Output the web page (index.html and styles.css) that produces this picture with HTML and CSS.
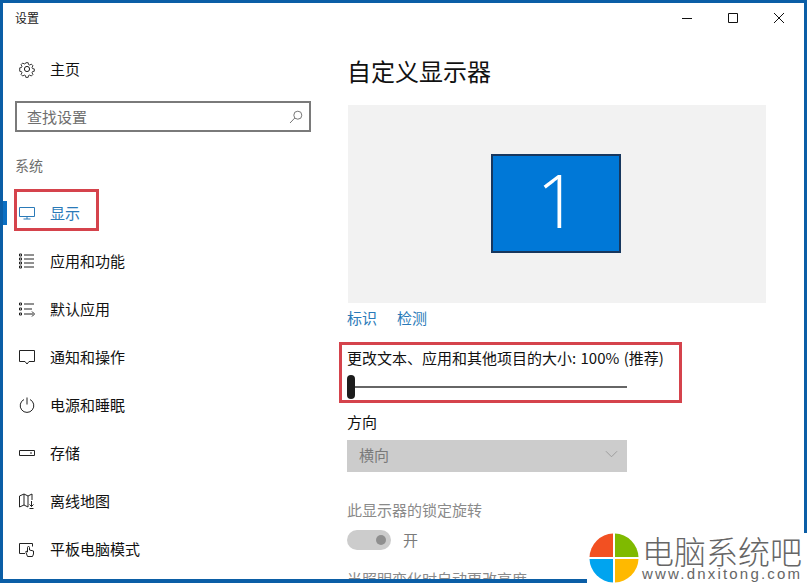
FILE: index.html
```html
<!DOCTYPE html>
<html lang="zh-CN">
<head>
<meta charset="utf-8">
<title>设置</title>
<link rel="stylesheet" href="styles.css">
</head>
<body>
<div class="window">
  <header class="titlebar">
    <span class="title">设置</span>
    <div class="controls">
      <svg class="ctl" viewBox="0 0 12 12"><path d="M1 6.500h10"/></svg>
      <svg class="ctl" viewBox="0 0 12 12"><path d="M1.500 1.500h9v9h-9z"/></svg>
      <svg class="ctl" viewBox="0 0 12 12"><path d="M1 1l10 10M11 1L1 11"/></svg>
    </div>
  </header>
  <div class="body">
    <aside class="sidebar">
      <div class="row home">
        <svg class="ico" viewBox="0 0 16 16"><circle cx="8" cy="8" r="2.600"/><path d="M6.700 1h2.600l.4 2 1.300.6 1.800-1 1.800 1.800-1 1.800.5 1.300 2 .4v2.600l-2 .4-.5 1.300 1 1.800-1.800 1.800-1.800-1-1.300.5-.4 2H6.700l-.4-2-1.300-.5-1.800 1-1.800-1.800 1-1.800-.5-1.300-2-.4V6.700l2-.4.5-1.300-1-1.800L3.200 1.400l1.800 1 1.300-.5z" transform="translate(.8 .8) scale(.9)"/></svg>
        <span>主页</span>
      </div>
      <div class="search">
        <span>查找设置</span>
        <svg class="search-ico" viewBox="0 0 14 14"><circle cx="8.800" cy="5.200" r="4"/><path d="M5.800 8L1 13"/></svg>
      </div>
      <div class="group">系统</div>
      <nav class="nav">
        <div class="row active">
          <svg class="ico" viewBox="0 0 16 16"><path d="M.5 2.500h15v9H.5zM8 11.500v2.500M4.500 14h7"/></svg>
          <span>显示</span>
        </div>
        <div class="row">
          <svg class="ico" viewBox="0 0 16 16"><path d="M.5 1h2v2h-2zM.5 5h2v2h-2zM.5 9h2v2h-2zM.5 13h2v2h-2zM5 2h10M5 6h10M5 10h10M5 14h10"/></svg>
          <span>应用和功能</span>
        </div>
        <div class="row">
          <svg class="ico" viewBox="0 0 16 16"><path d="M.5 2h2v2h-2zM.5 7h2v2h-2zM.5 12h2v2h-2zM5 3h10M5 8h8M5 13h9M13 10.500l2.500 2.500-2.500 2.500"/></svg>
          <span>默认应用</span>
        </div>
        <div class="row">
          <svg class="ico" viewBox="0 0 16 16"><path d="M.5 1.500h15v11H10l-2 2.500-2-2.500H.5z"/></svg>
          <span>通知和操作</span>
        </div>
        <div class="row">
          <svg class="ico" viewBox="0 0 16 16"><path d="M5 2.500a6.800 6.800 0 1 0 6 0M8 .5v7"/></svg>
          <span>电源和睡眠</span>
        </div>
        <div class="row">
          <svg class="ico" viewBox="0 0 16 16"><path d="M.5 5.500h15v5H.5zM11 8h2"/></svg>
          <span>存储</span>
        </div>
        <div class="row">
          <svg class="ico" viewBox="0 0 16 16"><path d="M.5 3l4.500-2 4 2 4-2v6M.5 3v11l4.500-2 4 2M5 1v11M9 3v11M12.500 8v5.500M10.500 11.500l2 2 2-2M10.500 15.500h4"/></svg>
          <span>离线地图</span>
        </div>
        <div class="row">
          <svg class="ico" viewBox="0 0 16 16"><path d="M6 12.500H.5v-10h13v3M8.500 15.500L7 11.500V10l1.500 1V6.500a1 1 0 0 1 2 0V9l4 1v3l-1 2.500z"/></svg>
          <span>平板电脑模式</span>
        </div>
      </nav>
    </aside>
    <main class="main">
      <h1 class="heading">自定义显示器</h1>
      <section class="preview">
        <div class="monitor">1</div>
      </section>
      <div class="links"><a>标识</a><a>检测</a></div>
      <div class="label scale-label">更改文本、应用和其他项目的大小: 100% (推荐)</div>
      <div class="slider"><span class="thumb"></span><span class="track"></span></div>
      <div class="label orient-label">方向</div>
      <div class="select"><span>横向</span>
        <svg class="chev" viewBox="0 0 14 8"><path d="M1 1l6 6 6-6"/></svg>
      </div>
      <div class="label dim lock-label">此显示器的锁定旋转</div>
      <div class="toggle-row"><span class="toggle"><span class="knob"></span></span><span class="toggle-text">开</span></div>
      <div class="label dim last-label">当照明变化时自动更改亮度</div>
    </main>
  </div>
  <div class="mark mark-nav"></div>
  <div class="mark mark-scale"></div>
</div>
<div class="watermark">
  <svg class="wm-logo" viewBox="0 0 50 50">
    <path class="q1" d="M24 24V.5A24.500 24.500 0 0 0 .5 24z"/>
    <path class="q2" d="M26 24V.5A24.500 24.500 0 0 1 49.500 24z"/>
    <path class="q3" d="M24 26v23.500A24.500 24.500 0 0 1 .5 26z"/>
    <path class="q4" d="M26 26v23.500A24.500 24.500 0 0 0 49.500 26z"/>
  </svg>
  <div class="wm-text">
    <div class="wm-cn">电脑系统吧</div>
    <div class="wm-url">www.dnxitong.com</div>
  </div>
</div>
</body>
</html>
```

FILE: styles.css
```css
* { box-sizing: border-box; }
html, body { margin: 0; height: 100%; overflow: hidden; background: #fff; }
body { position: relative; font-family: "Open Sans", "Noto Sans CJK SC", sans-serif; font-size: 15px; color: #111; }
.window { position: relative; width: 807px; height: 583px; border: 3px solid #0b5ea6; border-bottom-width: 4px; background: #fff; overflow: hidden; display: flex; flex-direction: column; }
.titlebar { height: 30px; flex: none; display: flex; align-items: center; justify-content: space-between; padding: 0 0 0 12px; }
.title { font-size: 12px; color: #222; margin-bottom: 2px; font-family: "Noto Sans CJK SC", sans-serif; }
.controls { display: flex; align-items: center; gap: 34px; padding-right: 19px; }
.ctl { width: 12px; height: 12px; fill: none; stroke: #111; stroke-width: 1; }
.body { flex: 1; display: flex; min-height: 0; }
.sidebar { width: 344px; flex: none; padding-top: 13px; }
.row { position: relative; height: 48px; display: flex; align-items: center; padding-left: 16px; gap: 15px; font-family: "Noto Sans CJK SC", sans-serif; }
.row span { margin-bottom: 2px; }
.home { margin-top: -1px; margin-bottom: 1px; }
.ico { width: 16px; height: 16px; flex: none; fill: none; stroke: #222; stroke-width: 1; overflow: visible; }
.search { margin: 8px 0 0 12px; width: 296px; height: 31px; border: 2px solid #7a7a7a; display: flex; align-items: center; justify-content: space-between; padding: 0 6px 0 10px; color: #6e6e6e; font-family: "Noto Sans CJK SC", sans-serif; }
.search-ico { width: 14px; height: 14px; fill: none; stroke: #777; stroke-width: 1; }
.group { margin: 24px 0 13px 12px; height: 20px; line-height: 18px; font-size: 14px; color: #6e6e6e; font-family: "Noto Sans CJK SC", sans-serif; }
.nav { display: flex; flex-direction: column; }
.active { color: #2a7ab8; }
.active .ico { stroke: #2a7ab8; }
.active::before { content: ""; position: absolute; left: 0; top: 12px; width: 4px; height: 24px; background: #0b6fc2; }
.main { flex: 1; min-width: 0; font-family: "Noto Sans CJK SC", sans-serif; }
.heading { margin: 21px 0 17px; height: 34px; line-height: 34px; font-size: 24px; font-weight: 400; color: #111; }
.preview { width: 418px; height: 198px; margin-left: 1px; background: #f2f2f2; display: flex; justify-content: center; align-items: center; padding-right: 2px; }
.monitor { width: 130px; height: 99px; margin-top: -1px; padding: 0 0 8px 3px; background: #0078d7; border: 2px solid #17375e; color: #fff; display: flex; align-items: center; justify-content: center; font-size: 74px; font-weight: 300; font-family: "Open Sans", sans-serif; }
.links { margin-top: 5px; height: 20px; line-height: 20px; display: flex; gap: 20px; color: #2a7ab8; }
.label { height: 20px; line-height: 20px; white-space: nowrap; }
.scale-label { margin-top: 20px; word-spacing: 1px; }
.slider { margin-top: 7px; width: 280px; height: 24px; display: flex; align-items: center; }
.thumb { width: 8px; height: 24px; border-radius: 4px; background: #1c1c1c; flex: none; }
.track { flex: 1; height: 2px; background: #666; }
.orient-label { margin-top: 13px; }
.select { margin-top: 8px; width: 280px; height: 32px; background: #cccccc; color: #7a7a7a; display: flex; align-items: center; justify-content: space-between; padding: 0 9px 0 12px; }
.select span { margin-bottom: 4px; }
.chev { width: 13px; height: 8px; fill: none; stroke: #999; stroke-width: 1; margin-bottom: 4px; }
.dim { color: #8a8a8a; }
.lock-label { margin-top: 28px; }
.toggle-row { margin-top: 10px; height: 20px; display: flex; align-items: center; gap: 12px; }
.toggle { width: 44px; height: 20px; border-radius: 10px; background: #cccccc; display: flex; align-items: center; justify-content: flex-end; padding-right: 5px; }
.knob { width: 10px; height: 10px; border-radius: 50%; background: #8f8f8f; }
.toggle-text { color: #7a7a7a; margin-bottom: 2px; }
.last-label { margin-top: 19px; }
.mark { position: absolute; border: 3px solid #d5434c; pointer-events: none; }
.mark-nav { left: 11px; top: 186px; width: 85px; height: 42px; }
.mark-scale { left: 336px; top: 339px; width: 343px; height: 61px; }
.watermark { position: absolute; left: 587px; top: 533px; width: 220px; height: 50px; background: #fff; display: flex; padding-left: 2px; }
.wm-logo { width: 50px; height: 50px; flex: none; }
.q1 { fill: #f25022; }
.q2 { fill: #7fba00; }
.q3 { fill: #00a4ef; }
.q4 { fill: #ffb900; }
.wm-text { margin-left: 3px; font-family: "Noto Sans CJK SC", sans-serif; color: #666; white-space: nowrap; }
.wm-cn { font-size: 32px; line-height: 34px; height: 34px; font-weight: 300; }
.wm-url { font-family: "Liberation Sans", sans-serif; font-size: 15px; line-height: 14px; letter-spacing: 2.2px; }
```
